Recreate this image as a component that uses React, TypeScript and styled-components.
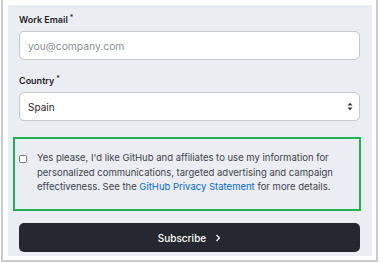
import React from "react";
import styled, { createGlobalStyle } from "styled-components";

const Global = createGlobalStyle`
  html, body { margin: 0; padding: 0; background: #ffffff; }
  body { font-family: Inter, "Noto Sans", sans-serif; -webkit-font-smoothing: antialiased; }
  * { box-sizing: border-box; }
`;

const Frame = styled.div`
  margin-left: 1px;
  width: 377px;
  height: 262px;
  border: 2px solid #c9cbcf;
  border-top: none;
  padding: 5px 4px 4px 5px;
  background: #ffffff;
`;

const Panel = styled.form`
  height: 251px;
  background: #eaedf1;
  padding: 9px 11px 0 11px;
  display: flex;
  flex-direction: column;
`;

const Field = styled.div<{ $mb: number }>`
  display: flex;
  flex-direction: column;
  gap: 5px;
  margin-bottom: ${(p) => p.$mb}px;
`;

const Label = styled.label`
  display: block;
  height: 12px;
  font-family: Inter, "Noto Sans", sans-serif;
  font-size: 9px;
  font-weight: 600;
  line-height: 12px;
  color: #1f2328;
`;

const Star = styled.span`
  font-size: 7px;
  line-height: 0;
  vertical-align: 3px;
  margin-left: 2px;
  font-weight: 500;
`;

const TextInput = styled.input`
  display: block;
  width: 341px;
  height: 29px;
  border: 1px solid #c4c8cd;
  border-radius: 5px;
  background: #ffffff;
  padding: 0 8px;
  font-family: Inter, "Noto Sans", sans-serif;
  font-size: 10px;
  color: #1f2328;
  outline: none;
  &::placeholder { color: #8a9098; font-size: 10.3px; }
`;

const SelectBox = styled.div`
  width: 341px;
  height: 29px;
  border: 1px solid #c4c8cd;
  border-radius: 5px;
  background: #ffffff;
  display: flex;
  align-items: center;
  padding: 0 6px 0 8px;
  font-family: Inter, "Noto Sans", sans-serif;
  font-size: 10px;
  color: #1f2328;
`;

const Value = styled.span`
  flex: 1;
`;

const Consent = styled.div`
  margin-left: -6px;
  width: 348px;
  height: 74px;
  flex: none;
  border: 2px solid #1fb254;
  display: flex;
  align-items: flex-start;
  gap: 10px;
  padding: 12px 4px 0 4px;
  margin-bottom: 12px;
`;

const Check = styled.span`
  flex: none;
  width: 8px;
  height: 8px;
  margin-top: 4px;
  border: 1px solid #6e7781;
  border-radius: 1.5px;
  background: #ffffff;
`;

const ConsentText = styled.p`
  margin: 0;
  font-family: Inter, "Noto Sans", sans-serif;
  font-size: 9.5px;
  line-height: 14.5px;
  color: #3d444d;
  white-space: nowrap;
`;

const Link = styled.a`
  color: #0969da;
  text-decoration: none;
`;

const Button = styled.button`
  flex: none;
  width: 341px;
  height: 29px;
  border: none;
  border-radius: 5px;
  background: #25292f;
  color: #ffffff;
  font-family: Inter, "Noto Sans", sans-serif;
  font-size: 10px;
  font-weight: 500;
  display: flex;
  align-items: center;
  justify-content: center;
  gap: 9px;
  padding: 0;
`;

export default function App() {
  return (
    <>
      <Global />
      <Frame>
        <Panel>
          <Field $mb={15}>
            <Label>
              Work Email<Star>*</Star>
            </Label>
            <TextInput placeholder="you@company.com" />
          </Field>
          <Field $mb={16}>
            <Label>
              Country<Star>*</Star>
            </Label>
            <SelectBox>
              <Value>Spain</Value>
              <svg width="6" height="9" viewBox="0 0 6 9">
                <path d="M0.5 3.5 L3 0.8 L5.5 3.5 Z" fill="#333" />
                <path d="M0.5 5.5 L3 8.2 L5.5 5.5 Z" fill="#333" />
              </svg>
            </SelectBox>
          </Field>
          <Consent>
            <Check />
            <ConsentText>
              Yes please, I'd like GitHub and affiliates to use my information for
              <br />
              personalized communications, targeted advertising and campaign
              <br />
              effectiveness. See the <Link href="#">GitHub Privacy Statement</Link> for more details.
            </ConsentText>
          </Consent>
          <Button type="button">
            Subscribe
            <svg width="6" height="8" viewBox="0 0 6 8">
              <path d="M1.5 1 L4.5 4 L1.5 7" stroke="#fff" strokeWidth="1.1" fill="none" />
            </svg>
          </Button>
        </Panel>
      </Frame>
    </>
  );
}
